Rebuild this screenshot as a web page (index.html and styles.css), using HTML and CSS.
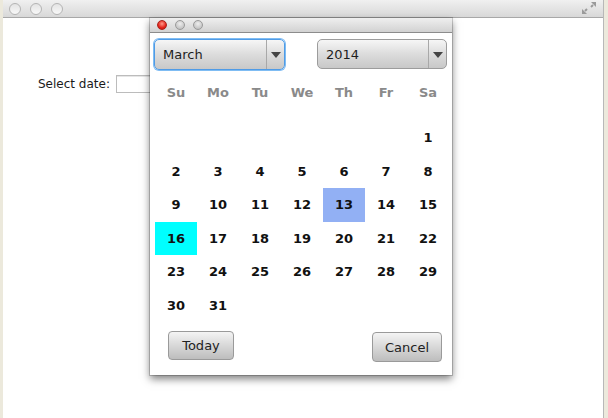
FILE: index.html
```html
<!DOCTYPE html>
<html>
<head>
<meta charset="utf-8">
<link rel="stylesheet" href="styles.css">
</head>
<body>
<div class="window">
  <div class="titlebar">
    <div class="lights">
      <span class="dot"></span><span class="dot"></span><span class="dot"></span>
    </div>
    <svg class="resize" width="16" height="14" viewBox="0 0 16 14">
      <path d="M15 1 L10 1 L15 6 Z" fill="#9a9a9a"/>
      <path d="M12 4 L10 6" stroke="#9a9a9a" stroke-width="2"/>
      <path d="M1 13 L6 13 L1 8 Z" fill="#9a9a9a"/>
      <path d="M4 10 L6 8" stroke="#9a9a9a" stroke-width="2"/>
    </svg>
  </div>
  <div class="content">
    <div class="field-row">
      <label class="label">Select date:</label>
      <div class="textfield"></div>
    </div>
  </div>

  <div class="popup">
    <div class="ptitle">
      <span class="pdot red"></span><span class="pdot"></span><span class="pdot"></span>
    </div>
    <div class="combos">
      <div class="combo month focused"><span class="ctext">March</span><span class="carrow"></span></div>
      <div class="combo year"><span class="ctext">2014</span><span class="carrow"></span></div>
    </div>
    <div class="weekdays">
      <span>Su</span><span>Mo</span><span>Tu</span><span>We</span><span>Th</span><span>Fr</span><span>Sa</span>
    </div>
    <div class="days">
      <span></span><span></span><span></span><span></span><span></span><span></span><span>1</span>
      <span>2</span><span>3</span><span>4</span><span>5</span><span>6</span><span>7</span><span>8</span>
      <span>9</span><span>10</span><span>11</span><span>12</span><span class="sel">13</span><span>14</span><span>15</span>
      <span class="today">16</span><span>17</span><span>18</span><span>19</span><span>20</span><span>21</span><span>22</span>
      <span>23</span><span>24</span><span>25</span><span>26</span><span>27</span><span>28</span><span>29</span>
      <span>30</span><span>31</span><span></span><span></span><span></span><span></span><span></span>
    </div>
    <div class="buttons">
      <button class="btn btn-today">Today</button>
      <button class="btn btn-cancel">Cancel</button>
    </div>
  </div>
</div>
</body>
</html>
```
FILE: styles.css
```css
html, body {
  margin: 0;
  padding: 0;
}
body {
  background: #ece9dc;
  width: 608px;
  height: 418px;
  overflow: hidden;
  font-family: "DejaVu Sans", "Liberation Sans", sans-serif;
}
.window {
  position: relative;
  margin-left: 3px;
  width: 600px;
  height: 418px;
  background: #ffffff;
  border-right: 1px solid #b8b8b8;
}
.titlebar {
  height: 17px;
  background: linear-gradient(#f0f0f0, #d8d8d8);
  border-bottom: 1px solid #a8a8a8;
  display: flex;
  align-items: center;
  justify-content: space-between;
  padding: 0 6px 0 6px;
}
.lights {
  display: flex;
  gap: 9px;
}
.dot {
  width: 10px;
  height: 10px;
  border-radius: 50%;
  border: 1px solid #b4b4b4;
  background: linear-gradient(#e4e4e4, #f8f8f8);
}
.resize {
  margin-top: -2px;
}
.content {
  padding-top: 57px;
  padding-left: 35px;
}
.field-row {
  display: flex;
  align-items: center;
  gap: 6px;
}
.label {
  font-size: 12px;
  color: #1a1a1a;
}
.textfield {
  width: 60px;
  height: 16px;
  border: 1px solid #bcbcbc;
  box-shadow: inset 0 1px 0 #e6e6e6;
}
.popup {
  position: absolute;
  left: 147px;
  top: 18px;
  width: 302px;
  height: 357px;
  background: #ffffff;
  box-shadow: 0 4px 8px rgba(0,0,0,0.5), 0 0 0 1px rgba(0,0,0,0.18);
}
.ptitle {
  height: 14px;
  background: linear-gradient(#efefef, #d2d2d2);
  border-bottom: 1px solid #8c8c8c;
  display: flex;
  align-items: center;
  gap: 8px;
  padding-left: 7px;
}
.pdot {
  width: 10px;
  height: 10px;
  border-radius: 50%;
  background: radial-gradient(circle at 50% 35%, #eeeeee, #b4b4b4);
  border: 0.5px solid #9a9a9a;
  box-sizing: border-box;
}
.pdot.red {
  background: radial-gradient(circle at 50% 35%, #ff9a8a, #e3231a 60%, #b8120c);
  border-color: #a8231a;
}
.combos {
  display: flex;
  justify-content: space-between;
  padding: 6px 5px 0 4px;
  height: 31px;
}
.combo {
  position: relative;
  display: flex;
  align-items: center;
  height: 29px;
  border: 1px solid #9c9c9c;
  border-radius: 5px;
  background: linear-gradient(#f6f6f6, #dcdcdc 50%, #c8c8c8);
  box-sizing: content-box;
}
.combo.month {
  width: 129px;
  border-color: #4f9be6;
  box-shadow: 0 0 0 1px #7fbcf3;
}
.combo.year {
  width: 128px;
  height: 28px;
}
.ctext {
  flex: 1;
  font-size: 13px;
  color: #1e1e1e;
  padding-left: 8px;
}
.carrow {
  width: 17px;
  height: 100%;
  border-left: 1px solid #a8a8a8;
  position: relative;
}
.carrow::after {
  content: "";
  position: absolute;
  left: 4px;
  top: 12px;
  border-left: 5px solid transparent;
  border-right: 5px solid transparent;
  border-top: 6px solid #444;
}
.weekdays {
  display: grid;
  grid-template-columns: repeat(7, 42px);
  padding-left: 5px;
  margin-top: 5px;
  height: 34px;
  align-items: center;
}
.weekdays span {
  text-align: center;
  font-size: 13px;
  font-weight: bold;
  color: #8a8a8a;
}
.days {
  display: grid;
  grid-template-columns: repeat(7, 42px);
  grid-auto-rows: 33.5px;
  padding-left: 5px;
  margin-top: 12px;
}
.days span {
  display: flex;
  align-items: center;
  justify-content: center;
  font-size: 13px;
  font-weight: bold;
  color: #111;
}
.days span.sel {
  background: #92b0f4;
}
.days span.today {
  background: #00ffff;
}
.buttons {
  display: flex;
  justify-content: space-between;
  padding: 9px 10px 0 18px;
}
.btn {
  font-family: "DejaVu Sans", "Liberation Sans", sans-serif;
  font-size: 13px;
  color: #222;
  border: 1px solid #9a9a9a;
  border-radius: 4px;
  background: linear-gradient(#f4f4f4, #d8d8d8 50%, #bdbdbd);
  padding: 0;
}
.btn-today {
  width: 66px;
  height: 29px;
}
.btn-cancel {
  width: 70px;
  height: 30px;
  margin-top: 1px;
}
```
